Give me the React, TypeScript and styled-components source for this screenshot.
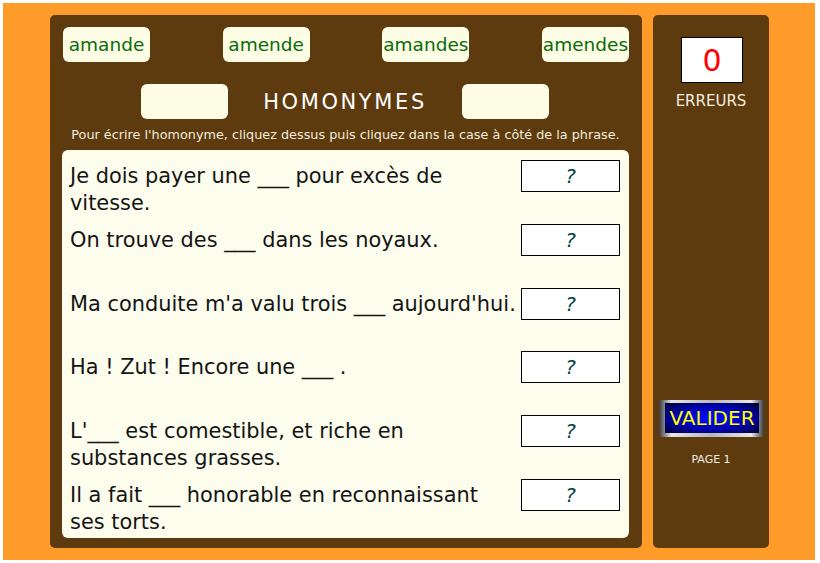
import styled, { createGlobalStyle } from 'styled-components';

const GlobalStyle = createGlobalStyle`
  html, body {
    margin: 0;
    padding: 0;
    background: #ffffff;
  }
`;

const words = ['amande', 'amende', 'amandes', 'amendes'];

const sentences = [
  'Je dois payer une ___ pour excès de vitesse.',
  'On trouve des ___ dans les noyaux.',
  "Ma conduite m'a valu trois ___ aujourd'hui.",
  'Ha ! Zut ! Encore une ___ .',
  "L'___ est comestible, et riche en substances grasses.",
  'Il a fait ___ honorable en reconnaissant ses torts.',
];

export default function App() {
  return (
    <>
      <GlobalStyle />
      <Page>
        <Stage>
          <MainPanel>
            <WordRow>
              {words.map((w) => (
                <WordButton key={w}>{w}</WordButton>
              ))}
            </WordRow>
            <TitleRow>
              <BlankBox />
              <Title>HOMONYMES</Title>
              <BlankBox />
            </TitleRow>
            <Instruction>
              Pour écrire l'homonyme, cliquez dessus puis cliquez dans la case à côté de la phrase.
            </Instruction>
            <Sheet>
              {sentences.map((s) => (
                <Row key={s}>
                  <Sentence>{s}</Sentence>
                  <AnswerBox>?</AnswerBox>
                </Row>
              ))}
            </Sheet>
          </MainPanel>
          <SidePanel>
            <Counter>0</Counter>
            <SideLabel>ERREURS</SideLabel>
            <Spacer />
            <ValidateButton>
              <ValidateInner>VALIDER</ValidateInner>
            </ValidateButton>
            <PageLabel>PAGE 1</PageLabel>
          </SidePanel>
        </Stage>
      </Page>
    </>
  );
}

const Page = styled.div`
  padding: 3px;
  width: 812px;
`;

const Stage = styled.div`
  width: 812px;
  height: 557px;
  box-sizing: border-box;
  background: #ff9b29;
  display: flex;
  padding: 12px 0 12px 47px;
  gap: 11px;
  font-family: 'DejaVu Sans', Verdana, sans-serif;
`;

const MainPanel = styled.div`
  width: 592px;
  height: 533px;
  box-sizing: border-box;
  background: #5d3b0f;
  border-radius: 5px;
  padding: 12px 13px 10px 12px;
  display: flex;
  flex-direction: column;
`;

const WordRow = styled.div`
  display: flex;
  justify-content: space-between;
  padding: 0 0 0 1px;
`;

const WordButton = styled.div`
  width: 87px;
  height: 35px;
  box-sizing: border-box;
  background: #fdfde6;
  border-radius: 6px;
  color: #0a6b0a;
  font-size: 18.5px;
  display: flex;
  align-items: center;
  justify-content: center;
`;

const TitleRow = styled.div`
  display: flex;
  justify-content: center;
  align-items: center;
  margin-top: 22px;
  padding-right: 1px;
`;

const BlankBox = styled.div`
  width: 87px;
  height: 35px;
  background: #fdfde6;
  border-radius: 6px;
`;

const Title = styled.div`
  width: 234px;
  text-align: center;
  color: #ffffff;
  font-size: 21px;
  letter-spacing: 2.6px;
  font-family: 'DejaVu Sans', sans-serif;
`;

const Instruction = styled.div`
  margin-top: 8px;
  text-align: center;
  color: #f3ecdc;
  font-size: 12.8px;
  line-height: 16px;
  white-space: nowrap;
`;

const Sheet = styled.div`
  margin-top: 7px;
  height: 388px;
  box-sizing: border-box;
  overflow: hidden;
  background: #fdfdee;
  border-radius: 6px;
  padding: 10px 9px 0 8px;
  display: flex;
  flex-direction: column;
`;

const Row = styled.div`
  height: 63.8px;
  flex-shrink: 0;
  display: flex;
  align-items: flex-start;
  justify-content: space-between;
`;

const Sentence = styled.div`
  width: 447px;
  padding-top: 3px;
  font-size: 20.9px;
  line-height: 27px;
  color: #141414;
`;

const AnswerBox = styled.div`
  width: 99px;
  height: 32px;
  box-sizing: border-box;
  border: 1.5px solid #000;
  background: #ffffff;
  color: #00403a;
  font-size: 20px;
  font-style: italic;
  display: flex;
  align-items: center;
  justify-content: center;
`;

const SidePanel = styled.div`
  width: 116px;
  height: 533px;
  box-sizing: border-box;
  background: #5d3b0f;
  border-radius: 5px;
  padding: 22px 0 0;
  display: flex;
  flex-direction: column;
  align-items: center;
`;

const Counter = styled.div`
  width: 62px;
  height: 46px;
  box-sizing: border-box;
  border: 1.5px solid #000;
  background: #ffffff;
  color: #ff0000;
  font-size: 30px;
  display: flex;
  align-items: center;
  justify-content: center;
  margin-left: 2px;
`;

const SideLabel = styled.div`
  margin-top: 9px;
  color: #f5eee0;
  font-size: 15px;
`;

const Spacer = styled.div`
  height: 290px;
`;

const ValidateButton = styled.div`
  width: 105px;
  height: 37px;
  box-sizing: border-box;
  padding: 3px 5px 4px 6px;
  background: linear-gradient(90deg, #3a3a3a 0%, #e8e8e8 12%, #b8b8b8 50%, #e8e8e8 88%, #3a3a3a 100%);
  margin-left: 1px;
`;

const ValidateInner = styled.div`
  height: 100%;
  background: radial-gradient(ellipse at center, #0010ff 0%, #0000b0 55%, #000030 100%);
  color: #ffff00;
  font-size: 20px;
  display: flex;
  align-items: center;
  justify-content: center;
`;

const PageLabel = styled.div`
  margin-top: 16px;
  color: #f5eee0;
  font-size: 11px;
`;
